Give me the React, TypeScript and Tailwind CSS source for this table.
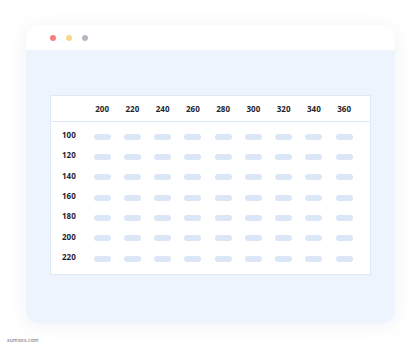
const cols = [200, 220, 240, 260, 280, 300, 320, 340, 360];
const rows = [100, 120, 140, 160, 180, 200, 220];

export default function App() {
  return (
    <div className="w-[420px] h-[348px] bg-white relative" style={{ fontFamily: '"Open Sans", "Noto Sans", sans-serif' }}>
      <div className="pt-[25px] pl-[26px]">
        {/* window */}
        <div className="w-[369px] h-[298px] rounded-[12px] overflow-hidden bg-[#eef4fe] shadow-[0_2px_18px_rgba(120,140,170,0.12)] flex flex-col">
          <div className="h-[25px] bg-white flex items-center gap-[10px] pl-[24px] shrink-0">
            <span className="w-[6px] h-[6px] rounded-full bg-[#f87f7f]" />
            <span className="w-[6px] h-[6px] rounded-full bg-[#fcd58c]" />
            <span className="w-[6px] h-[6px] rounded-full bg-[#b3b9bf]" />
          </div>

          {/* table */}
          <div className="mt-[45px] ml-[24px] w-[321px] h-[180px] bg-white border border-[#dfe8f5]">
            <div className="h-[26px] flex items-center border-b border-[#dfe8f5]">
              <div className="w-[36px] shrink-0" />
              {cols.map((c) => (
                <div key={c} className="w-[30.25px] text-center text-[8px] font-bold text-[#1f2430]">
                  {c}
                </div>
              ))}
            </div>
            <div className="pt-[3px]">
              {rows.map((r) => (
                <div key={r} className="h-[20.33px] flex items-center">
                  <div className="w-[36px] shrink-0 pl-[11px] text-[8px] font-bold text-[#1f2430]">{r}</div>
                  {cols.map((c) => (
                    <div key={c} className="w-[30.25px] flex justify-center pt-[3px]">
                      <span className="w-[17px] h-[6px] rounded-full bg-[#dbe6f6]" />
                    </div>
                  ))}
                </div>
              ))}
            </div>
          </div>
        </div>
      </div>
      <div className="absolute left-[7px] top-[337px] text-[5px] text-[#555] tracking-[0.2px]">xumoxs.com</div>
    </div>
  );
}
